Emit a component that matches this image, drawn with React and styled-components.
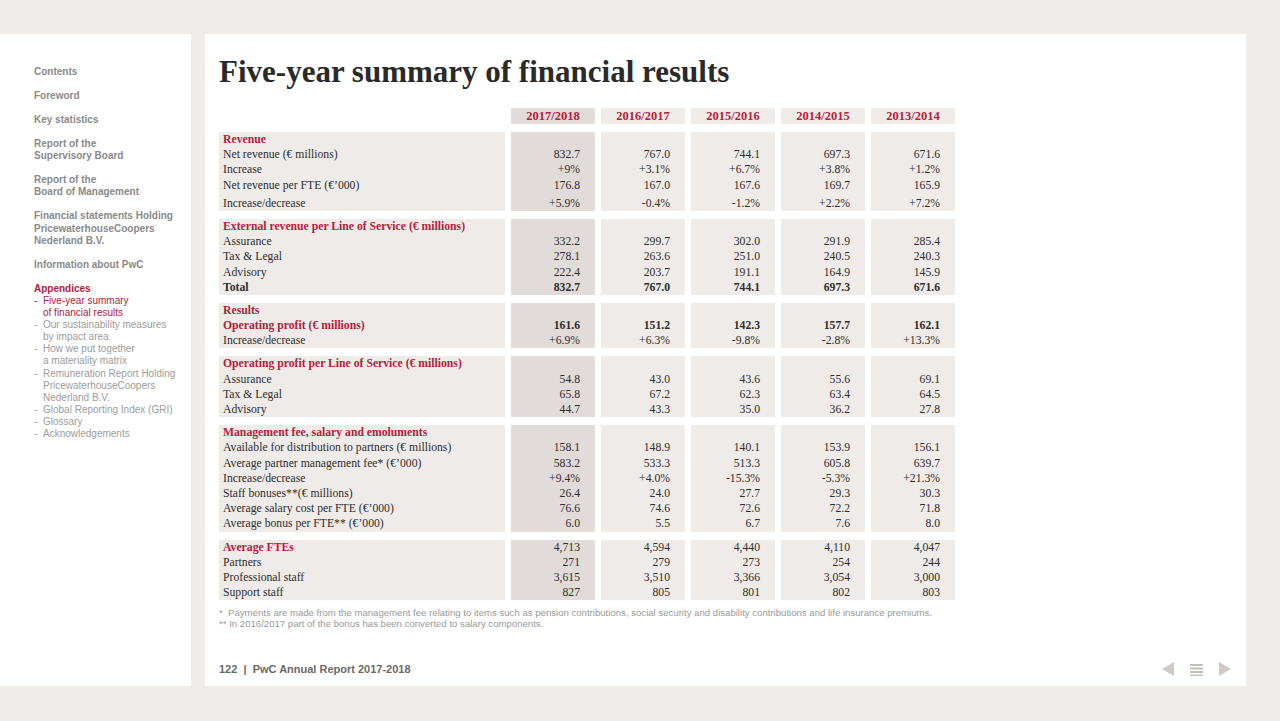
import React from "react";
import styled, { createGlobalStyle } from "styled-components";

const GlobalStyle = createGlobalStyle`
  body {
    margin: 0;
    background: #f0ece9;
    font-family: "Liberation Sans", Arial, sans-serif;
  }
`;

const RED = "#b5203a";
const SERIF = `"Liberation Serif", "Times New Roman", serif`;

const Page = styled.div`
  display: flex;
  gap: 14px;
  padding-top: 34px;
  width: 1280px;
  height: 721px;
  box-sizing: border-box;
`;

const Sidebar = styled.nav`
  width: 191px;
  height: 652px;
  background: #fff;
  box-sizing: border-box;
  padding: 32px 0 0 34px;
`;

const NavList = styled.ul`
  list-style: none;
  margin: 0;
  padding: 0;
  display: flex;
  flex-direction: column;
  gap: 11.8px;
`;

const NavItem = styled.li`
  font-size: 10px;
  line-height: 12.2px;
  font-weight: 700;
  color: ${(p) => (p.$active ? RED : "#8a8a8a")};
`;

const SubList = styled.ul`
  list-style: none;
  margin: 0;
  padding: 0;
`;

const SubItem = styled.li`
  display: flex;
  font-size: 10px;
  line-height: 12.1px;
  font-weight: 400;
  color: ${(p) => (p.$active ? RED : "#9c9c9c")};
`;

const Dash = styled.span`
  width: 9px;
  flex-shrink: 0;
`;

const Main = styled.main`
  width: 1041px;
  height: 652px;
  background: #fff;
  box-sizing: border-box;
  padding: 20px 15px 10px 14px;
  display: flex;
  flex-direction: column;
`;

const Title = styled.h1`
  margin: 0 0 19px;
  font-family: ${SERIF};
  font-size: 31px;
  line-height: 35px;
  font-weight: 700;
  color: #2a2a2a;
`;

const Table = styled.div`
  display: grid;
  grid-template-columns: 286px repeat(5, 84px);
  column-gap: 6px;
  row-gap: 8px;
  font-family: ${SERIF};
  font-size: 11.7px;
  color: #2e2e2e;
`;

const YearCell = styled.div`
  height: 16px;
  line-height: 16px;
  text-align: center;
  font-size: 12.5px;
  font-weight: 700;
  color: ${RED};
  background: ${(p) => (p.$current ? "#e1dcd9" : "#f0ecea")};
`;

const Block = styled.div`
  background: ${(p) => (p.$current ? "#e1dcd9" : "#efebe9")};
  padding: 0 ${(p) => (p.$label ? "0" : "15px")} 0 ${(p) => (p.$label ? "4px" : "0")};
  text-align: ${(p) => (p.$label ? "left" : "right")};
`;

const Line = styled.div`
  line-height: 15.2px;
  height: 15.2px;
  white-space: nowrap;
  font-weight: ${(p) => (p.$bold ? 700 : 400)};
  color: ${(p) => (p.$red ? RED : "inherit")};
  padding-top: ${(p) => (p.$spaced ? "3px" : "0")};
`;

const Notes = styled.div`
  margin-top: 7px;
  font-size: 9.6px;
  line-height: 11px;
  color: #9a9a9a;
`;

const Footer = styled.footer`
  margin-top: auto;
  display: flex;
  align-items: center;
  justify-content: space-between;
  height: 14px;
`;

const FooterText = styled.div`
  font-size: 11px;
  font-weight: 700;
  color: #6a6a6a;
`;

const PagerNav = styled.div`
  display: flex;
  align-items: center;
  gap: 16px;
`;

const years = ["2017/2018", "2016/2017", "2015/2016", "2014/2015", "2013/2014"];

const groups = [
  [
    { label: "Revenue", red: true, bold: true },
    { label: "Net revenue (€ millions)", values: ["832.7", "767.0", "744.1", "697.3", "671.6"] },
    { label: "Increase", values: ["+9%", "+3.1%", "+6.7%", "+3.8%", "+1.2%"] },
    { label: "Net revenue per FTE (€’000)", values: ["176.8", "167.0", "167.6", "169.7", "165.9"] },
    { label: "Increase/decrease", values: ["+5.9%", "-0.4%", "-1.2%", "+2.2%", "+7.2%"], spaced: true },
  ],
  [
    { label: "External revenue per Line of Service (€ millions)", red: true, bold: true },
    { label: "Assurance", values: ["332.2", "299.7", "302.0", "291.9", "285.4"] },
    { label: "Tax & Legal", values: ["278.1", "263.6", "251.0", "240.5", "240.3"] },
    { label: "Advisory", values: ["222.4", "203.7", "191.1", "164.9", "145.9"] },
    { label: "Total", bold: true, boldValues: true, values: ["832.7", "767.0", "744.1", "697.3", "671.6"] },
  ],
  [
    { label: "Results", red: true, bold: true },
    { label: "Operating profit (€ millions)", red: true, bold: true, boldValues: true, values: ["161.6", "151.2", "142.3", "157.7", "162.1"] },
    { label: "Increase/decrease", values: ["+6.9%", "+6.3%", "-9.8%", "-2.8%", "+13.3%"] },
  ],
  [
    { label: "Operating profit per Line of Service (€ millions)", red: true, bold: true },
    { label: "Assurance", values: ["54.8", "43.0", "43.6", "55.6", "69.1"] },
    { label: "Tax & Legal", values: ["65.8", "67.2", "62.3", "63.4", "64.5"] },
    { label: "Advisory", values: ["44.7", "43.3", "35.0", "36.2", "27.8"] },
  ],
  [
    { label: "Management fee, salary and emoluments", red: true, bold: true },
    { label: "Available for distribution to partners (€ millions)", values: ["158.1", "148.9", "140.1", "153.9", "156.1"] },
    { label: "Average partner management fee* (€’000)", values: ["583.2", "533.3", "513.3", "605.8", "639.7"] },
    { label: "Increase/decrease", values: ["+9.4%", "+4.0%", "-15.3%", "-5.3%", "+21.3%"] },
    { label: "Staff bonuses**(€ millions)", values: ["26.4", "24.0", "27.7", "29.3", "30.3"] },
    { label: "Average salary cost per FTE (€’000)", values: ["76.6", "74.6", "72.6", "72.2", "71.8"] },
    { label: "Average bonus per FTE** (€’000)", values: ["6.0", "5.5", "6.7", "7.6", "8.0"] },
  ],
  [
    { label: "Average FTEs", red: true, bold: true, values: ["4,713", "4,594", "4,440", "4,110", "4,047"] },
    { label: "Partners", values: ["271", "279", "273", "254", "244"] },
    { label: "Professional staff", values: ["3,615", "3,510", "3,366", "3,054", "3,000"] },
    { label: "Support staff", values: ["827", "805", "801", "802", "803"] },
  ],
];

const mainNav = [
  ["Contents"],
  ["Foreword"],
  ["Key statistics"],
  ["Report of the", "Supervisory Board"],
  ["Report of the", "Board of Management"],
  ["Financial statements Holding", "PricewaterhouseCoopers", "Nederland B.V."],
  ["Information about PwC"],
];

const appendices = [
  { lines: ["Five-year summary", "of financial results"], active: true },
  { lines: ["Our sustainability measures", "by impact area"] },
  { lines: ["How we put together", "a materiality matrix"] },
  { lines: ["Remuneration Report Holding", "PricewaterhouseCoopers", "Nederland B.V."] },
  { lines: ["Global Reporting Index (GRI)"] },
  { lines: ["Glossary"] },
  { lines: ["Acknowledgements"] },
];

function Group({ rows }) {
  return (
    <>
      <Block $label>
        {rows.map((r, i) => (
          <Line key={i} $bold={r.bold} $red={r.red} $spaced={r.spaced}>
            {r.label}
          </Line>
        ))}
      </Block>
      {years.map((y, col) => (
        <Block key={y} $current={col === 0}>
          {rows.map((r, i) => (
            <Line key={i} $bold={r.boldValues} $spaced={r.spaced}>
              {r.values ? r.values[col] : ""}
            </Line>
          ))}
        </Block>
      ))}
    </>
  );
}

export default function App() {
  return (
    <>
      <GlobalStyle />
      <Page>
        <Sidebar>
          <NavList>
            {mainNav.map((lines) => (
              <NavItem key={lines.join()}>
                {lines.map((l) => (
                  <div key={l}>{l}</div>
                ))}
              </NavItem>
            ))}
            <NavItem $active>
              Appendices
              <SubList>
                {appendices.map((a) => (
                  <SubItem key={a.lines[0]} $active={a.active}>
                    <Dash>-</Dash>
                    <div>
                      {a.lines.map((l) => (
                        <div key={l}>{l}</div>
                      ))}
                    </div>
                  </SubItem>
                ))}
              </SubList>
            </NavItem>
          </NavList>
        </Sidebar>

        <Main>
          <Title>Five-year summary of financial results</Title>
          <Table>
            <div />
            {years.map((y, i) => (
              <YearCell key={y} $current={i === 0}>
                {y}
              </YearCell>
            ))}
            {groups.map((g, i) => (
              <Group key={i} rows={g} />
            ))}
          </Table>
          <Notes>
            <div>*&nbsp; Payments are made from the management fee relating to items such as pension contributions, social security and disability contributions and life insurance premiums.</div>
            <div>** In 2016/2017 part of the bonus has been converted to salary components.</div>
          </Notes>
          <Footer>
            <FooterText>122&nbsp; |&nbsp; PwC Annual Report 2017-2018</FooterText>
            <PagerNav>
              <svg width="12" height="14" viewBox="0 0 12 14">
                <polygon points="12,0 12,14 0,7" fill="#cfcac6" />
              </svg>
              <svg width="13" height="13" viewBox="0 0 13 13">
                <g fill="#c4c0bc">
                  <rect x="0" y="1" width="13" height="2" />
                  <rect x="0" y="4.5" width="13" height="2" />
                  <rect x="0" y="8" width="13" height="2" />
                  <rect x="0" y="11.5" width="13" height="1.5" />
                </g>
              </svg>
              <svg width="12" height="14" viewBox="0 0 12 14">
                <polygon points="0,0 0,14 12,7" fill="#cfcac6" />
              </svg>
            </PagerNav>
          </Footer>
        </Main>
      </Page>
    </>
  );
}
